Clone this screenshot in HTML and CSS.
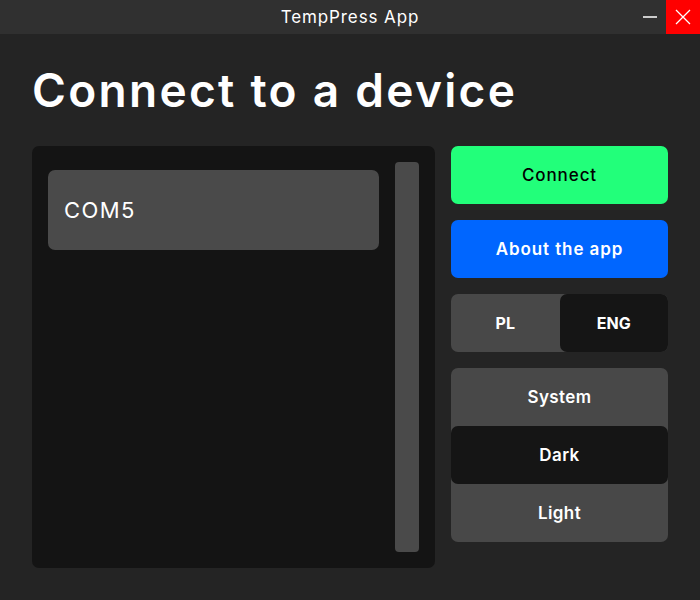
FILE: index.html
```html
<!DOCTYPE html>
<html>
<head>
<meta charset="utf-8">
<link rel="stylesheet" href="styles.css">
</head>
<body>
<div class="window">
  <div class="titlebar">
    <span class="title">TempPress App</span>
    <div class="controls">
      <div class="ctl min"><svg width="16" height="16" viewBox="0 0 16 16"><line x1="1" y1="8" x2="15" y2="8" stroke="#fff" stroke-width="1.5"/></svg></div>
      <div class="ctl close"><svg width="16" height="16" viewBox="0 0 16 16"><path d="M1 1L15 15M15 1L1 15" stroke="#fff" stroke-width="1.3"/></svg></div>
    </div>
  </div>
  <div class="content">
    <h1 class="heading">Connect to a device</h1>
    <div class="main">
      <div class="list">
        <div class="items">
          <div class="item">COM5</div>
        </div>
        <div class="scrollbar"></div>
      </div>
      <div class="side">
        <button class="btn connect">Connect</button>
        <button class="btn about">About the app</button>
        <div class="seg">
          <div class="seg-opt">PL</div>
          <div class="seg-opt active">ENG</div>
        </div>
        <div class="theme">
          <div class="theme-opt">System</div>
          <div class="theme-opt active">Dark</div>
          <div class="theme-opt">Light</div>
        </div>
      </div>
    </div>
  </div>
</div>
</body>
</html>
```

FILE: styles.css
```css
* { box-sizing: border-box; }
html, body { margin: 0; padding: 0; }
body {
  width: 700px;
  height: 600px;
  background: #242424;
  font-family: "Inter", "Liberation Sans", sans-serif;
  color: #fff;
  overflow: hidden;
}
.window { display: flex; flex-direction: column; height: 600px; }
.titlebar {
  height: 34px;
  background: #303030;
  position: relative;
  display: flex;
  align-items: center;
  justify-content: center;
}
.title { font-size: 17px; color: #fff; font-weight: 400; letter-spacing: 0.9px; }
.controls { position: absolute; right: 0; top: 0; height: 34px; display: flex; }
.ctl { width: 34px; height: 34px; display: flex; align-items: center; justify-content: center; }
.ctl.min { width: 32px; }
.ctl.close { background: #ff0000; }
.content { padding: 0 32px; }
.heading {
  margin: 28px 0 0 0;
  font-size: 46px;
  font-weight: 600;
  line-height: 56px;
  letter-spacing: 2.3px;
}
.main { display: flex; gap: 16px; margin-top: 28px; }
.list {
  width: 403px;
  height: 422px;
  background: #141414;
  border-radius: 7px;
  display: flex;
  padding: 16px;
  gap: 16px;
}
.items { flex: 1; padding-top: 8px; }
.item {
  height: 80px;
  background: #4a4a4a;
  border-radius: 7px;
  display: flex;
  align-items: center;
  padding-left: 16px;
  font-size: 22px;
  font-family: "Inter", sans-serif;
  font-weight: 400;
  letter-spacing: 1.4px;
}
.scrollbar { width: 24px; background: #4a4a4a; border-radius: 4px; }
.side { width: 217px; display: flex; flex-direction: column; gap: 16px; }
.btn {
  height: 58px;
  border: none;
  border-radius: 7px;
  font-family: "Inter", sans-serif;
  font-size: 17px;
  font-weight: 500;
  padding: 0;
  letter-spacing: 0.9px;
}
.connect { background: #22ff7a; color: #000; }
.about { background: #0066ff; color: #fff; font-weight: 600; letter-spacing: 0.9px; }
.seg {
  height: 58px;
  background: #484848;
  border-radius: 7px;
  display: flex;
}
.seg-opt {
  flex: 1;
  display: flex;
  align-items: center;
  justify-content: center;
  font-size: 16px;
  font-weight: 700;
  border-radius: 7px;
}
.seg-opt.active { background: #151515; }
.theme {
  background: #484848;
  border-radius: 7px;
  display: flex;
  flex-direction: column;
}
.theme-opt {
  height: 58px;
  display: flex;
  align-items: center;
  justify-content: center;
  font-size: 17px;
  font-weight: 600;
  border-radius: 7px;
  letter-spacing: 0.4px;
}
.theme-opt.active { background: #151515; }
```
